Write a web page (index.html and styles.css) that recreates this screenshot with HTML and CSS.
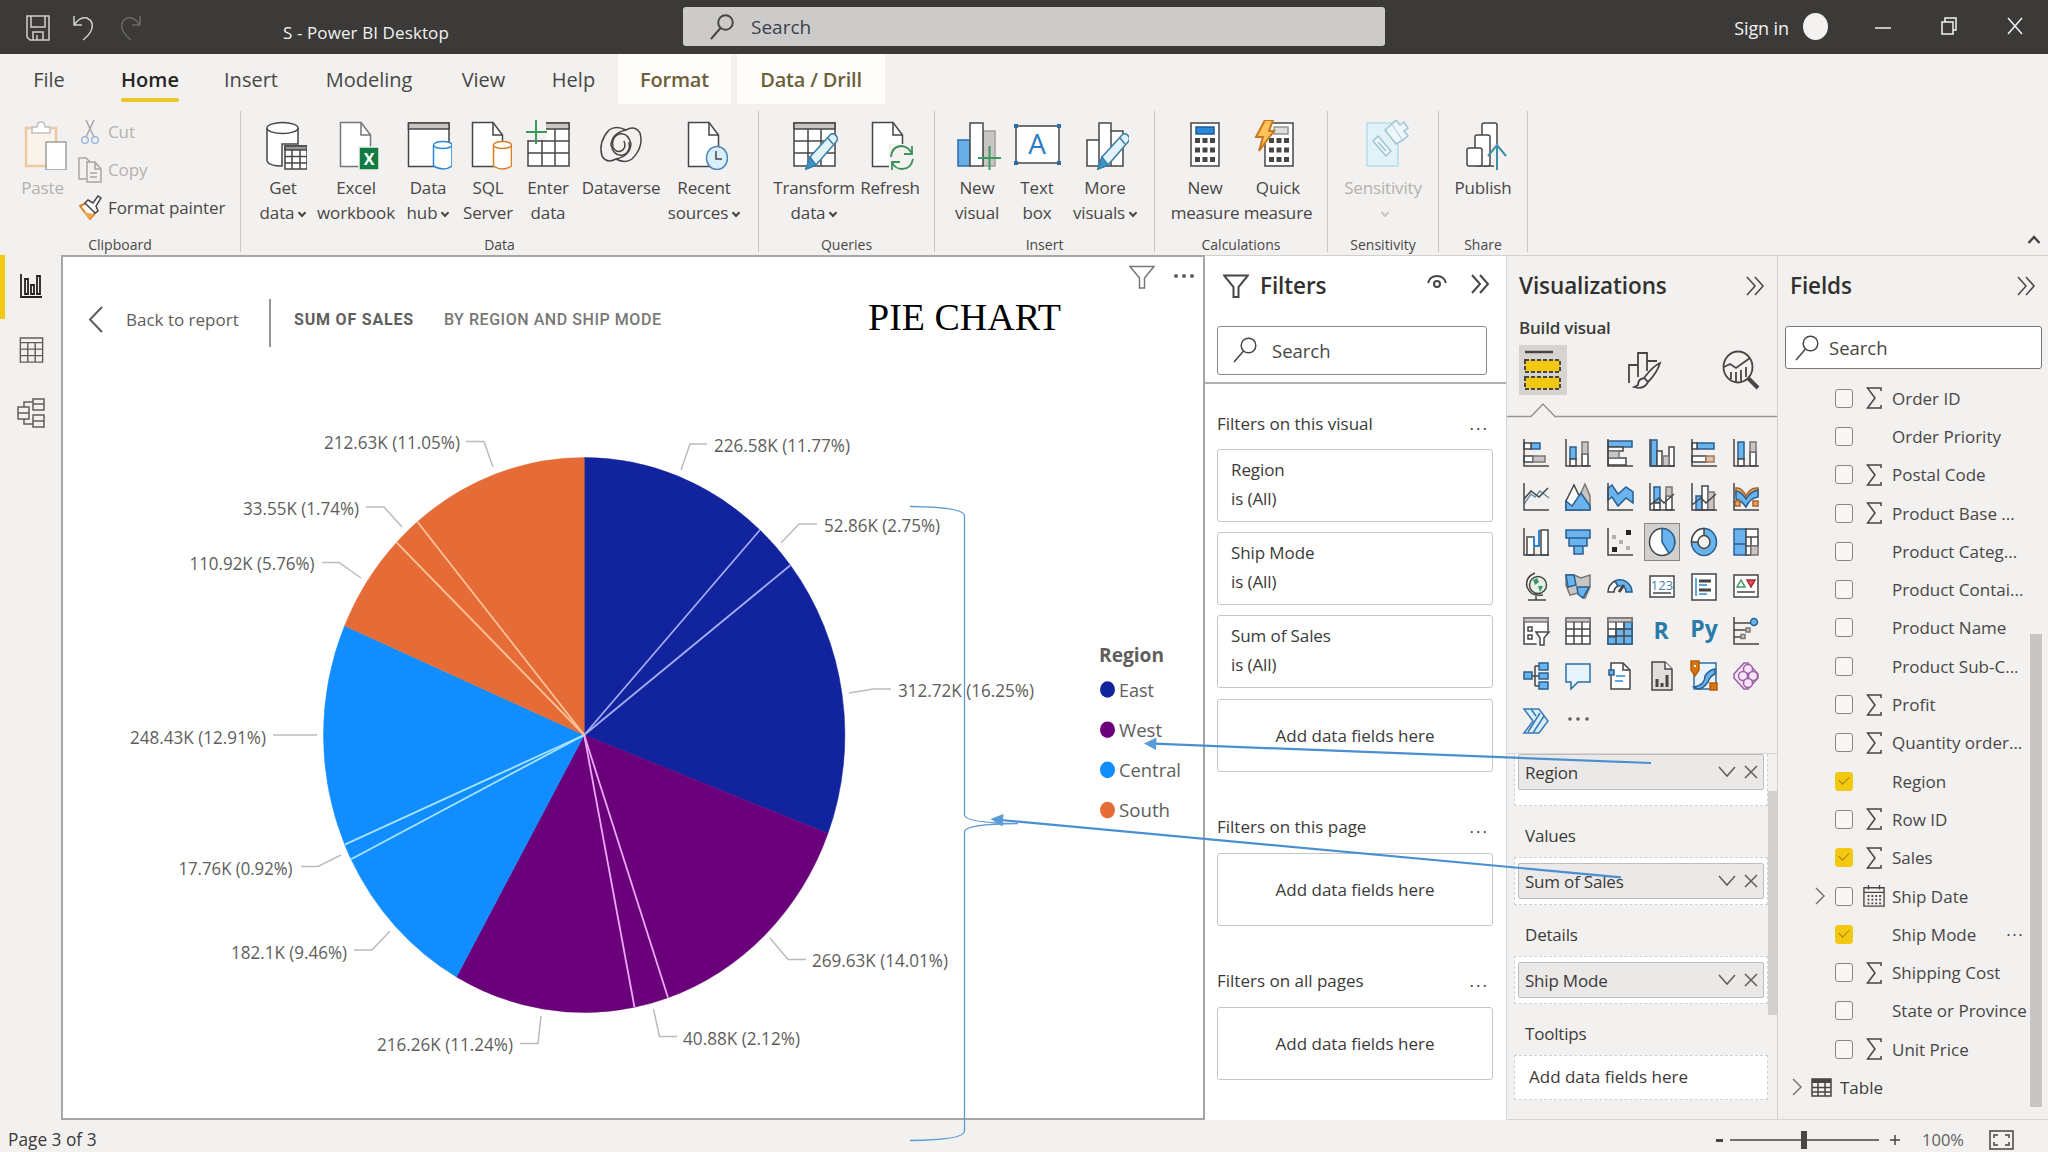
FILE: index.html
```
<!DOCTYPE html>
<html lang="en">
<head>
    <meta charset="UTF-8">
    <meta name="viewport" content="width=device-width, initial-scale=1.0">
    <title>S - Power BI Desktop</title>
    <link rel="stylesheet" href="styles.css">
</head>
<body>
    <!-- shared icons -->
    <svg class="sprite">
        <symbol id="search" viewBox="0 0 24 26"><circle cx="15.5" cy="8.5" r="7.3"/><path d="M10.5 14L1 25"/></symbol>
        <symbol id="page" viewBox="-24 0 48 50"><path d="M-15.5 2.5H5L14.5 15V46.5H-15.5Z" fill="#fff"/><path d="M5 2.5V15H14.5" fill="none"/></symbol>
        <symbol id="pencil" viewBox="-24 0 48 50"><path d="M-8 49L-4 37L17 14Q21 13 23 17Q24 20 22 22L2 45Z" fill="#e3f3fb"/><path d="M-8 49L-4 37L2 45Z" fill="#3a96c8"/><path d="M14 18L19 24" fill="none"/></symbol>
        <symbol id="collapse" viewBox="0 0 20 20"><path d="M2 1L10 10L2 19M10 1L18 10L10 19"/></symbol>
        <symbol id="down" viewBox="0 0 18 12"><path d="M1 1L9 10L17 1"/></symbol>
        <symbol id="close" viewBox="0 0 14 14"><path d="M1 1L13 13M13 1L1 13"/></symbol>
        <symbol id="right" viewBox="0 0 12 18"><path d="M2 1L10 9L2 17"/></symbol>
        <symbol id="sigma" viewBox="0 0 16 22"><path d="M15 4V1H1.5L9 11L1.5 21H15V18"/></symbol>
        <symbol id="funnel" viewBox="0 0 26 24"><path d="M1 1.5H25L15.5 13V23H10.5V13Z"/></symbol>
        <symbol id="table" viewBox="0 0 26 28"><path d="M1 1H25V27H1ZM1 6H25M1 13H25M1 20H25M9 6V27M17 6V27"/></symbol>
    </svg>

    <header class="titlebar">
        <div class="quick">
            <svg width="24" height="26" viewBox="0 0 24 26"><path d="M1 1H23V25H4L1 22ZM5 1V12H19V1M7 25V17H17V25M11 20V25"/></svg>
            <svg width="24" height="26" viewBox="0 0 24 26"><path d="M2 1V10H10M2 10Q8 1 15 3Q23 7 19 16Q17 20 11 25"/></svg>
            <svg class="dim" width="24" height="26" viewBox="0 0 24 26"><path d="M22 1V10H14M22 10Q16 1 9 3Q1 7 5 16Q7 20 13 25"/></svg>
        </div>
        <div class="title">S - Power BI Desktop</div>
        <div class="title-search"><svg width="24" height="26"><use href="#search"/></svg>Search</div>
        <div class="window-controls">
            <span class="sign-in">Sign in</span>
            <span class="avatar"></span>
            <svg width="16" height="18" viewBox="0 0 16 18"><path d="M0 11H16"/></svg>
            <svg width="16" height="18" viewBox="0 0 16 18"><path d="M1 5H12V17H1ZM4 5V1H15V13H12"/></svg>
            <svg width="16" height="18" viewBox="0 0 16 18"><path d="M1 1L15 17M15 1L1 17"/></svg>
        </div>
    </header>

    <nav class="tabs">
        <a class="tab tab-file">File</a>
        <a class="tab tab-home active">Home</a>
        <a class="tab tab-insert">Insert</a>
        <a class="tab tab-modeling">Modeling</a>
        <a class="tab tab-view">View</a>
        <a class="tab tab-help">Help</a>
        <a class="tab context tab-format">Format</a>
        <a class="tab context tab-drill">Data / Drill</a>
    </nav>

    <section class="ribbon">
        <div class="group group-clipboard">
            <div class="tools">
                <div class="tool disabled">
                    <svg width="48" height="50" viewBox="-24 0 48 50"><path d="M-17 8H13V46H-17Z" fill="#faf3ec" stroke="#ecc9a0" stroke-width="2.5"/><path d="M-11 13V7H-6Q-6 2 -2 2Q2 2 2 7H7V13Z" fill="#fff" stroke="#c2c0be"/><path d="M3 22H23V50H3Z" fill="#fff" stroke="#a19f9d"/></svg>
                    Paste
                </div>
                <div class="small-tools">
                    <div class="small-tool disabled"><svg width="24" height="26" viewBox="0 0 24 26"><path d="M8 1L16 18M16 1L8 18"/><g stroke="#9db8dc"><circle cx="7" cy="21" r="3.3"/><circle cx="17" cy="21" r="3.3"/></g></svg>Cut</div>
                    <div class="small-tool disabled"><svg width="24" height="26" viewBox="0 0 24 26"><path d="M8 22H1V1H8L12 5M9 5H17L23 12V25H9ZM17 5V12H23M12 16H19M12 20H19"/></svg>Copy</div>
                    <div class="small-tool"><svg width="24" height="26" viewBox="0 0 24 26"><path d="M2 11L12 24L18 17L8 8Z" fill="#fff" stroke="#d98027" stroke-width="2"/><path d="M5 17L12 24L16 19Z" fill="#f5a552" stroke="none"/><path d="M7 8L10 5L15 8L20 1L23 3L18 11L20 16L17 18Z" fill="#fff"/></svg>Format painter</div>
                </div>
            </div>
            <div class="group-name">Clipboard</div>
        </div>

        <div class="group group-data">
            <div class="tools">
                <div class="tool">
                    <svg width="48" height="50" viewBox="-24 0 48 50"><path d="M-16 8V41Q-14 46 -1 46V24H15V8" fill="#fff"/><ellipse cx="-.5" cy="8" rx="15.5" ry="5.5" fill="#fff"/><path d="M2 26H24V49H2Z" fill="#fff"/><path d="M2 26H24V30H2Z" fill="#979593"/><path d="M2 36.500H24M2 43H24M9 30V49M17 30V49"/></svg>
                    Get<br>data<i></i>
                </div>
                <div class="tool">
                    <svg width="48" height="50" viewBox="-24 0 48 50"><use href="#page" x="-24" width="48" height="50" stroke="#797775"/><path d="M3 27H23V50H3Z" fill="#107c41" stroke="#f3f2f1"/><text x="13" y="44.500" class="x-mark">X</text></svg>
                    Excel<br>workbook
                </div>
                <div class="tool">
                    <svg width="48" height="50" viewBox="-24 0 48 50"><path d="M-19.500 3H21V46.500H-19.500Z" fill="#fff"/><path d="M-19.500 3H21V9H-19.500Z" fill="#c8c6c4"/><path d="M5.500 25V46Q15 52 24 46V25" fill="#fff" stroke="#2b88d8"/><ellipse cx="14.800" cy="25" rx="9.200" ry="3.500" fill="#fff" stroke="#2b88d8"/></svg>
                    Data<br>hub<i></i>
                </div>
                <div class="tool">
                    <svg width="48" height="50" viewBox="-24 0 48 50"><use href="#page" x="-24" width="48" height="50"/><path d="M5.500 25V46Q14.500 52 23.500 46V25" fill="#fff" stroke="#d98027"/><ellipse cx="14.500" cy="25" rx="9" ry="3.500" fill="#fff" stroke="#d98027"/></svg>
                    SQL<br>Server
                </div>
                <div class="tool">
                    <svg width="48" height="50" viewBox="-24 0 48 50"><path d="M-20 3H21V46H-20Z" fill="#fff"/><path d="M-20 3H21V9H-20Z" fill="#c8c6c4"/><path d="M-20 21H21M-20 33H21M-6 9V46M7 9V46"/><path d="M-22 0H-2V20H-22Z" fill="#f3f2f1" stroke="none"/><path d="M-12 0V24M-22 12H-1" stroke="#3c9a5f" stroke-width="2"/></svg>
                    Enter<br>data
                </div>
                <div class="tool">
                    <svg width="48" height="50" viewBox="-24 0 48 50"><path d="M-12 10Q-23 22 -19 36Q-14 44 -5 39Q9 36 10 24Q7 12 -2 14Q-10 17 -8 27Q-5 33 0 31Q6 28 3 21"/><path d="M11 39Q23 27 19 13Q14 5 5 10Q-9 13 -10 25Q-7 37 2 35Q10 32 8 22"/><path d="M-12 10Q-5 5 5 10M-5 39Q4 44 11 39"/></svg>
                    Dataverse
                </div>
                <div class="tool">
                    <svg width="48" height="50" viewBox="-24 0 48 50"><use href="#page" x="-24" width="48" height="50"/><ellipse cx="13" cy="38" rx="10.500" ry="11.500" fill="#d9effc" stroke="#4a86ba"/><path d="M12 31V39H18"/></svg>
                    Recent<br>sources<i></i>
                </div>
            </div>
            <div class="group-name">Data</div>
        </div>

        <div class="group group-queries">
            <div class="tools">
                <div class="tool">
                    <svg width="48" height="50" viewBox="-24 0 48 50"><path d="M-20 3H21V46H-20Z" fill="#fff"/><path d="M-20 3H21V9H-20Z" fill="#c8c6c4"/><path d="M-20 21H21M-20 33H21M-6 9V46M7 9V46"/><use href="#pencil" x="-24" width="48" height="50" stroke="#3a7fa8"/></svg>
                    Transform<br>data<i></i>
                </div>
                <div class="tool">
                    <svg width="48" height="50" viewBox="-24 0 48 50"><use href="#page" x="-26" width="48" height="50"/><path d="M-1 24H24V50H-1Z" fill="#f3f2f1" stroke="none"/><path d="M1 37Q2 26 12 26Q19 27 22 34M22 26V34H14M23 39Q21 49 12 49Q5 49 2 42M2 50V42H10" stroke="#3f8f5b" stroke-width="1.800"/></svg>
                    Refresh
                </div>
            </div>
            <div class="group-name">Queries</div>
        </div>

        <div class="group group-insert">
            <div class="tools">
                <div class="tool">
                    <svg width="48" height="50" viewBox="-24 0 48 50"><path d="M-19 20H-7V46H-19Z" fill="#69afe5" stroke="#2b6cb0"/><path d="M6 11H18V46H6Z" fill="#c8c6c4" stroke="#a19f9d"/><path d="M-7 3H6V46H-7Z" fill="#fff"/><path d="M12.500 26V50M1 38H24" stroke="#3c9a5f" stroke-width="2"/></svg>
                    New<br>visual
                </div>
                <div class="tool">
                    <svg width="48" height="50" viewBox="-24 0 48 50"><path d="M-21 6H22V43H-21Z" fill="#fff"/><text x="0" y="34" class="a-mark">A</text><path d="M-21 6h.1M22 6h.1M-21 43h.1M22 43h.1" stroke="#2b6ea5" stroke-width="4" stroke-linecap="square"/></svg>
                    Text<br>box
                </div>
                <div class="tool">
                    <svg width="48" height="50" viewBox="-24 0 48 50"><path d="M-18 20H-6V46H-18ZM6 11H18V46H6ZM-6 3H6V46H-6Z" fill="#fff"/><use href="#pencil" x="-23" width="48" height="50" stroke="#3a7fa8"/></svg>
                    More<br>visuals<i></i>
                </div>
            </div>
            <div class="group-name">Insert</div>
        </div>

        <div class="group group-calc">
            <div class="tools">
                <div class="tool">
                    <svg width="48" height="50" viewBox="-24 0 48 50"><path d="M-14 3H14V46H-14Z" fill="#fff"/><path d="M-9 7H9V14H-9Z" fill="#2b88d8" stroke="#1c5a91"/><path d="M-10 20.500H10M-10 30H10M-10 39.500H10" stroke-width="5" stroke-dasharray="5 2.500"/></svg>
                    New<br>measure
                </div>
                <div class="tool">
                    <svg width="48" height="50" viewBox="-24 0 48 50"><path d="M-13 3H15V46H-13Z" fill="#fff"/><path d="M-4 7H10V14H-4Z" fill="#e1dfdd" stroke="#979593"/><path d="M-9 20.500H11M-9 30H11M-9 39.500H11" stroke-width="5" stroke-dasharray="5 2.500"/><path d="M-13 0H-5L-9 11H-4L-19 31L-15 17H-22Z" fill="#ffc35c" stroke="#c8781e" stroke-width="2"/></svg>
                    Quick<br>measure
                </div>
            </div>
            <div class="group-name">Calculations</div>
        </div>

        <div class="group group-sensitivity">
            <div class="tools">
                <div class="tool disabled">
                    <svg width="54" height="50" viewBox="-27 0 54 50"><path d="M-16 3H15V46H-16Z" fill="#e2f2f9" stroke="#b5dcec"/><g fill="#eef7fb" stroke="#9fc3d2"><path d="M-10 21L-5 16L8 31L3 36ZM-5 22L3 31M2 10L9 4L20 20L13 24Z"/><path d="M9 4L13 0L17 5L21 2L25 8L21 11L25 16L20 20"/></g></svg>
                    Sensitivity<br><i></i>
                </div>
            </div>
            <div class="group-name">Sensitivity</div>
        </div>

        <div class="group group-share">
            <div class="tools">
                <div class="tool">
                    <svg width="48" height="50" viewBox="-24 0 48 50"><rect x="-1" y="3" width="15" height="43" rx="2" fill="#fff"/><rect x="-8" y="15" width="15" height="31" rx="2" fill="#fff"/><rect x="-16" y="28" width="15" height="18" rx="2" fill="#fff"/><path d="M8 24H21V50H11V44H8Z" fill="#f3f2f1" stroke="none"/><path d="M14 50V26M5 36L14 25L23 36" stroke="#3d8fa5" stroke-width="2"/></svg>
                    Publish
                </div>
            </div>
            <div class="group-name">Share</div>
        </div>
        <svg class="ribbon-toggle" width="14" height="9" viewBox="0 0 14 9"><path d="M1.500 8L7 2L12.500 8"/></svg>
    </section>

    <main class="workspace">
        <aside class="rail">
            <a class="rail-item active"><svg width="22" height="24" viewBox="0 0 22 24"><path d="M1 0V23H22M5 5H8V20H5ZM11 11H14V20H11ZM17 2H20V20H17Z"/></svg></a>
            <a class="rail-item"><svg width="25" height="26"><use href="#table"/></svg></a>
            <a class="rail-item"><svg width="28" height="30" viewBox="0 0 28 30"><path d="M1 9H12V21H1ZM1 15H12M16 1H27V12H16ZM16 6H27M16 17H27V29H16ZM16 23H27M7 9V4H16M7 21V26H16"/></svg></a>
        </aside>

        <section class="canvas">
            <div class="visual-header">
                <svg width="26" height="24"><use href="#funnel"/></svg>
                <svg class="dots" width="24" height="6" viewBox="0 0 24 6"><circle cx="4" cy="3" r="2"/><circle cx="12" cy="3" r="2"/><circle cx="20" cy="3" r="2"/></svg>
            </div>
            <div class="crumbs">
                <svg width="15" height="27" viewBox="0 0 15 27"><path d="M14 1L2 13.500L14 26"/></svg>
                <span class="back">Back to report</span>
                <span class="measure">SUM OF SALES</span>
                <span class="by">BY REGION AND SHIP MODE</span>
                <span class="chart-title">PIE CHART</span>
            </div>
            <svg class="chart" width="1138" height="740" viewBox="63 378 1138 740"></svg>
        </section>

        <aside class="filters">
            <div class="pane-head">
                <svg width="26" height="24"><use href="#funnel"/></svg>
                <h2>Filters</h2>
                <svg class="eye" width="20" height="15" viewBox="0 0 20 15"><path d="M1 8Q3 1 10 1Q17 1 19 8"/><circle cx="10" cy="9" r="3"/></svg>
                <svg width="20" height="20"><use href="#collapse"/></svg>
            </div>
            <div class="search-box"><svg width="24" height="26"><use href="#search"/></svg>Search</div>
            <div class="filter-list">
                <div class="filter-title">Filters on this visual<b>...</b></div>
                <div class="card">Region<br>is (All)</div>
                <div class="card">Ship Mode<br>is (All)</div>
                <div class="card">Sum of Sales<br>is (All)</div>
                <div class="card drop">Add data fields here</div>
                <div class="filter-title later">Filters on this page<b>...</b></div>
                <div class="card drop">Add data fields here</div>
                <div class="filter-title later">Filters on all pages<b>...</b></div>
                <div class="card drop">Add data fields here</div>
            </div>
        </aside>

        <aside class="visualizations">
            <div class="pane-head">
                <h2>Visualizations</h2>
                <svg width="20" height="20"><use href="#collapse"/></svg>
            </div>
            <h3>Build visual</h3>
            <div class="modes">
                <span class="mode active"><svg width="38" height="42" viewBox="0 0 38 42"><path d="M1 2H29" stroke-width="2.500"/><path d="M1 10H36V22H1ZM1 27H36V39H1Z" fill="#f2c811" stroke-dasharray="4 2" stroke-width="2"/></svg></span>
                <span class="mode"><svg width="36" height="38" viewBox="0 0 36 38"><path d="M2 32V14H11V26M11 14V2H20V20M20 10H30"/><path d="M33 12Q26 15 17 27L21 31Q30 22 33 12ZM17 27Q11 28 11 34L7 36Q17 39 21 31" fill="#f3f2f1"/></svg></span>
                <span class="mode"><svg width="38" height="40" viewBox="0 0 38 40"><ellipse cx="16" cy="17" rx="14.500" ry="15.500"/><path d="M2 17L8 14L14 18L28 8M9 22V29M14 22V32M19 20V31M24 17V27"/><path d="M26 28L36 38" stroke-width="4"/></svg></span>
            </div>
            <svg class="notch" width="270" height="16" viewBox="0 0 270 16"><path d="M0 14.500H24L36 2L48 14.500H270"/></svg>

            <div class="gallery">
                <svg viewBox="0 0 26 28"><path d="M8 4H17V10H8Z" class="b"/><path d="M1 4H8V10H1ZM1 17H10V23H1Z" class="w"/><path d="M10 17H22V23H10Z" class="g"/><path d="M1 0V27H26"/></svg>
                <svg viewBox="0 0 26 28"><path d="M5 8H11V20H5Z" class="b"/><path d="M5 20H11V27H5ZM17 15H23V27H17Z" class="w"/><path d="M17 3H23V15H17Z" class="g"/><path d="M1 0V27H26"/></svg>
                <svg viewBox="0 0 26 28"><path d="M1 2H25V8H1Z" class="b"/><path d="M1 8H16V12H1ZM1 19H19V26H1Z" class="w"/><path d="M1 12H12V19H1Z" class="g"/><path d="M1 0V27H26"/></svg>
                <svg viewBox="0 0 26 28"><path d="M2 1H8V27H2Z" class="b"/><path d="M8 12H13V27H8ZM20 8H25V27H20Z" class="w"/><path d="M14 17H20V27H14Z" class="g"/><path d="M1 0V27H26"/></svg>
                <svg viewBox="0 0 26 28"><path d="M6 4H23V10H6Z" class="b"/><path d="M1 4H6V10H1ZM1 17H15V23H1Z" class="w"/><path d="M15 17H23V23H15Z" class="t"/><path d="M1 0V27H26"/></svg>
                <svg viewBox="0 0 26 28"><path d="M5 3H11V20H5Z" class="b"/><path d="M5 20H11V27H5ZM17 13H23V27H17Z" class="w"/><path d="M17 3H23V13H17Z" class="g"/><path d="M1 0V27H26"/></svg>

                <svg viewBox="0 0 26 28"><path d="M1 21L8 11L12 14L17 8L26 15" stroke="#6a8fa8"/><path d="M1 16L8 8L16 14L25 5"/><path d="M1 0V27H26"/></svg>
                <svg viewBox="0 0 26 28"><path d="M14 14L20 1L25 13V27H14Z" class="g"/><path d="M1 18L9 2L16 17V27H1Z" class="w"/><path d="M1 18L7 23L16 10L25 23V27H1Z" class="b"/></svg>
                <svg viewBox="0 0 26 28"><path d="M1 5L5 2L11 11L19 4L26 9V20L19 15L11 23L5 14L1 17Z" class="b"/><path d="M1 0V27H26"/></svg>
                <svg viewBox="0 0 26 28"><path d="M5 4H11V20H5Z" class="b"/><path d="M5 20H11V27H5ZM17 13H23V27H17Z" class="w"/><path d="M17 4H23V13H17Z" class="g"/><path d="M1 0V27H26M1 22L10 15L15 20L25 11"/></svg>
                <svg viewBox="0 0 26 28"><path d="M5 13H11V27H5Z" class="b"/><path d="M11 3H17V27H11Z" class="w"/><path d="M17 9H23V27H17Z" class="g"/><path d="M1 0V27H26M1 22L10 15L15 20L25 11"/></svg>
                <svg viewBox="0 0 26 28"><path d="M3 5Q9 4 13 13Q17 4 25 5V12Q18 12 13 20Q9 14 3 12Z" class="o"/><path d="M3 8Q9 9 13 16Q17 9 25 7V14Q17 15 13 24Q8 17 3 16Z" class="b"/><path d="M2 18H7V23H2ZM20 18H25V23H20Z" class="o"/><path d="M1 0V27H26"/></svg>

                <svg viewBox="0 0 26 28"><path d="M4 9H11V27H4ZM18 2H25V27H18Z" class="w"/><path d="M11 9V18H16V2" stroke="#2b88d8" stroke-width="2"/><path d="M1 0V27H26"/></svg>
                <svg viewBox="0 0 26 28"><path d="M1 2H25V10H1ZM4 10H22V18H4ZM9 18H18V26H9Z" class="b"/></svg>
                <svg viewBox="0 0 26 28"><path d="M5 7h4v4h-4zM12 12h4v4h-4zM19 18h4v4h-4z" fill="#b3b0ad" stroke="none"/><path d="M19 2h5v5h-5zM5 19h5v5h-5z" fill="#252423" stroke="none"/><path d="M1 0V27H26"/></svg>
                <svg viewBox="0 0 26 28" class="selected"><ellipse cx="13" cy="14" rx="12.500" ry="13.500" class="w"/><path d="M13 .5A12.500 13.500 0 0 1 20 25.500L13 14Z" class="b"/></svg>
                <svg viewBox="0 0 26 28"><ellipse cx="13" cy="14" rx="12.500" ry="13.500" class="b"/><path d="M13 .5A12.500 13.500 0 0 0 .5 14H7L13 7Z" class="w"/><ellipse cx="13" cy="14" rx="6" ry="6.500" fill="#f3f2f1"/></svg>
                <svg viewBox="0 0 26 28"><path d="M1 1H13V27H1ZM1 16H13" class="b"/><path d="M13 1H25V9H13ZM13 9H18V18H13ZM18 9H25V18H18ZM13 18H18V27H13Z" class="w"/><path d="M18 18H25V27H18Z" class="g"/></svg>

                <svg viewBox="0 0 26 28"><circle cx="15" cy="12" r="8.500" fill="#e5f1e8" stroke="#484644"/><path d="M10 7L14 5L16 9L12 12ZM15 13H20L17 19Z" fill="#3c9a5f" stroke="none"/><path d="M12 0Q2 4 4 14Q8 24 20 22M13 23V27M5 27H23" stroke="#484644"/></svg>
                <svg viewBox="0 0 26 28"><path d="M1 2H9L16 5L25 2V14L20 25L13 20L5 22L1 12Z" class="g"/><path d="M1 2H9L11 12L3 14ZM12 14H24L18 25L13 21Z" class="b"/></svg>
                <svg viewBox="0 0 26 28"><path d="M1 19A12 13 0 0 1 8 8L11 13Q7 15 7 19Z" class="w"/><path d="M8 8A12 13 0 0 1 25 19H19Q19 12 11 13Z" class="b"/><path d="M12 19L17 12" stroke-width="3"/></svg>
                <svg viewBox="0 0 26 28"><path d="M1 3H25V24H1Z" class="w"/><text x="13" y="17" class="num">123</text><path d="M4 20H22"/></svg>
                <svg viewBox="0 0 26 28"><path d="M1 1H25V27H1Z" class="w"/><path d="M5 5V23" stroke="#2b88d8"/><path d="M8 8H20M8 17H20" stroke-width="3"/><path d="M8 12H16M8 21H16" stroke="#2b88d8"/></svg>
                <svg viewBox="0 0 26 28"><path d="M1 2H25V24H1Z" class="w"/><path d="M4 14L8 7L12 14Z" stroke="#3c9a5f"/><path d="M14 7H22L18 14Z" fill="#e0526a" stroke="#a4262c"/><path d="M4 19H22"/></svg>

                <svg viewBox="0 0 26 28"><path d="M1 1H25V27H1Z" class="w"/><path d="M1 1H25V5H1Z" class="g"/><path d="M5 10H9V14H5ZM5 18H9V22H5Z"/><path d="M12 14H27V29H14L12 20Z" fill="#f3f2f1" stroke="none"/><path d="M13 15H26L21 21V28H17V21Z" class="w"/></svg>
                <svg viewBox="0 0 26 28"><path d="M1 1H25V27H1Z" class="w"/><path d="M1 1H25V5H1Z" class="g"/><path d="M1 12H25M1 19H25M9 5V27M17 5V27"/></svg>
                <svg viewBox="0 0 26 28"><path d="M1 1H25V27H1Z" class="w"/><path d="M17 5H25V27H1V20H9V12H17Z" class="b"/><path d="M1 1H25V5H1Z" class="g"/><path d="M1 12H25M1 19H25M9 5V27M17 5V27"/></svg>
                <svg viewBox="0 0 26 28"><text x="12" y="22" class="r-mark">R</text></svg>
                <svg viewBox="0 0 26 28"><text x="13" y="20" class="py-mark">Py</text></svg>
                <svg viewBox="0 0 26 28"><path d="M1 6H18M1 13H13M1 20H8"/><circle cx="21" cy="5" r="3.500" class="b"/><path d="M13 11h4v4h-4zM8 17.500h4v4h-4z" class="g"/><path d="M1 0V27H26"/></svg>

                <svg viewBox="0 0 26 28"><path d="M9 14H16M12 4V24M12 4H16M12 24H16"/><path d="M1 10H9V17H1ZM16 1H25V8H16ZM16 11H25V17H16ZM16 20H25V27H16Z" class="b"/></svg>
                <svg viewBox="0 0 26 28"><path d="M1 2H25V20H13L6 27V20H1Z" fill="#e8f4fd" stroke="#2b6ea5"/></svg>
                <svg viewBox="0 0 26 28"><path d="M4 1H16L23 8V27H4Z" class="w"/><path d="M16 1V8H23"/><path d="M9 14H18M8 19H16" stroke="#2b88d8"/><path d="M2 8h5v5h-5z" class="b"/></svg>
                <svg viewBox="0 0 26 28"><path d="M3 0H16L23 7V28H3Z" fill="#e1dfdd"/><path d="M16 0V7H23" fill="#fff"/><path d="M8 17V25M13 21V25M18 13V25" stroke-width="3"/></svg>
                <svg viewBox="0 0 26 28"><path d="M3 1H25V27H3Z" fill="#e8f4fd" stroke="#2b6ea5"/><path d="M3 25Q14 23 14 14Q18 8 24 7V12Q19 14 17 20Q12 27 7 27Z" class="b"/><path d="M0 -1H8V8L4 14L0 8ZM19 21H26V28H19Z" fill="#d9730d" stroke="#b85c06"/><path d="M3 3h2v2h-2z" fill="#fff" stroke="none"/></svg>
                <svg viewBox="0 0 26 28"><g stroke="#9b5fa5" fill="#f5e6f7"><path d="M11 1H15L25 12V16L15 27H11L1 16V12Z"/><circle cx="15" cy="7" r="4.500"/><circle cx="10" cy="14" r="4.500"/><circle cx="20" cy="14" r="4.500"/><circle cx="15" cy="21" r="4.500"/></g></svg>

                <svg viewBox="0 0 26 28"><path d="M1 2H16L25 14L16 26H1L10 14Z" fill="#d9effc" stroke="#3a78b5"/><path d="M5 25L17 6M10 26L21 9M8 2L13 9" stroke="#3a78b5"/></svg>
                <svg viewBox="0 0 26 28" class="dots"><circle cx="5" cy="12" r="1.800"/><circle cx="13" cy="12" r="1.800"/><circle cx="22" cy="12" r="1.800"/></svg>
            </div>

            <div class="wells">
                <div class="well-list">
                    <div class="well first"><div class="pill">Region<svg width="18" height="12"><use href="#down"/></svg><svg width="14" height="14"><use href="#close"/></svg></div></div>
                    <h4>Values</h4>
                    <div class="well"><div class="pill">Sum of Sales<svg width="18" height="12"><use href="#down"/></svg><svg width="14" height="14"><use href="#close"/></svg></div></div>
                    <h4>Details</h4>
                    <div class="well"><div class="pill">Ship Mode<svg width="18" height="12"><use href="#down"/></svg><svg width="14" height="14"><use href="#close"/></svg></div></div>
                    <h4>Tooltips</h4>
                    <div class="well empty">Add data fields here</div>
                </div>
                <div class="scrollbar"></div>
            </div>
        </aside>

        <aside class="fields">
            <div class="pane-head">
                <h2>Fields</h2>
                <svg width="20" height="20"><use href="#collapse"/></svg>
            </div>
            <div class="search-box"><svg width="24" height="26"><use href="#search"/></svg>Search</div>
            <div class="tree">
                <div class="field-list">
                    <div class="field"><span></span><i></i><svg><use href="#sigma"/></svg>Order ID</div>
                    <div class="field"><span></span><i></i><svg></svg>Order Priority</div>
                    <div class="field"><span></span><i></i><svg><use href="#sigma"/></svg>Postal Code</div>
                    <div class="field"><span></span><i></i><svg><use href="#sigma"/></svg>Product Base ...</div>
                    <div class="field"><span></span><i></i><svg></svg>Product Categ...</div>
                    <div class="field"><span></span><i></i><svg></svg>Product Contai...</div>
                    <div class="field"><span></span><i></i><svg></svg>Product Name</div>
                    <div class="field"><span></span><i></i><svg></svg>Product Sub-C...</div>
                    <div class="field"><span></span><i></i><svg><use href="#sigma"/></svg>Profit</div>
                    <div class="field"><span></span><i></i><svg><use href="#sigma"/></svg>Quantity order...</div>
                    <div class="field checked"><span></span><i></i><svg></svg>Region</div>
                    <div class="field"><span></span><i></i><svg><use href="#sigma"/></svg>Row ID</div>
                    <div class="field checked"><span></span><i></i><svg><use href="#sigma"/></svg>Sales</div>
                    <div class="field"><span><svg class="arrow"><use href="#right"/></svg></span><i></i><svg viewBox="0 0 24 24"><path d="M1 3H23V23H1ZM1 8H23M6 0V5M18 0V5"/><path d="M5 12H20M5 16H20M5 20H20" stroke-dasharray="2 2.200" stroke-width="2"/></svg>Ship Date</div>
                    <div class="field checked"><span></span><i></i><svg></svg>Ship Mode<b>···</b></div>
                    <div class="field"><span></span><i></i><svg><use href="#sigma"/></svg>Shipping Cost</div>
                    <div class="field"><span></span><i></i><svg></svg>State or Province</div>
                    <div class="field"><span></span><i></i><svg><use href="#sigma"/></svg>Unit Price</div>
                    <div class="table-row"><svg class="arrow"><use href="#right"/></svg><svg width="21" height="19" viewBox="0 0 21 19"><path d="M1 1H20V18H1ZM1 9.500H20M1 14H20M7 5V18M14 5V18"/><path d="M1 3H20" stroke-width="4"/></svg>Table</div>
                </div>
                <div class="scrollbar"></div>
            </div>
        </aside>
    </main>

    <footer class="status">
        <span>Page 3 of 3</span>
        <div class="zoom">
            <svg width="186" height="20" viewBox="0 0 186 20"><path d="M1 10.500H8" stroke-width="3"/><path d="M15 10H164M175 10H185M180 5V15" stroke-width="1.500"/><path d="M89 1V19" stroke-width="6"/></svg>
            <span>100%</span>
            <svg width="25" height="20" viewBox="0 0 25 20"><path d="M1 1H24V19H1Z"/><path d="M5 8V5H9M16 5H20V8M20 12V15H16M9 15H5V12"/></svg>
        </div>
    </footer>

    <!-- callouts drawn over the report -->
    <svg class="callouts" width="2048" height="1152" viewBox="0 0 2048 1152">
        <path class="brace" d="M910 506.500Q964.500 507 964.500 516V815Q965 823 1018 823.500Q964.500 824 964.500 832V1131Q964.500 1140 910 1140.500"/>
        <path class="arrow-line" d="M1651 763L1154 743.700M1621 877.300L1001 820"/>
        <path class="arrow-head" d="M1144 743.500L1156.500 737.500L1156 750ZM990.500 819L1003.500 814L1002.500 826.500Z"/>
    </svg>

    <script>
        const svgNS = 'http://www.w3.org/2000/svg';
        const chart = document.querySelector('.chart');
        const cx = 584.2, cy = 735, rx = 260.7, ry = 277.5;

        const regions = [
            { name: 'East', color: '#12239e', line: '#a3adf5' },
            { name: 'West', color: '#6b007b', line: '#eaa8f5' },
            { name: 'Central', color: '#118dff', line: '#a8e4ff' },
            { name: 'South', color: '#e66c37', line: '#ffc39c' }
        ];

        // region, percent, label, label x, baseline, label width, leader points
        const slices = [
            [0, 11.77, '226.58K (11.77%)', 714, 452, 136, '681,470 690,444 707,444'],
            [0, 2.75, '52.86K (2.75%)', 824, 532, 116, '781,543 799,524 817,524'],
            [0, 16.25, '312.72K (16.25%)', 898, 697, 136, '849,693 873,689 891,689'],
            [1, 14.01, '269.63K (14.01%)', 812, 967, 136, '770,938 788,959.5 806,959.5'],
            [1, 2.12, '40.88K (2.12%)', 683, 1045, 117, '653.5,1009 659.5,1036.5 677,1036.5'],
            [1, 11.24, '216.26K (11.24%)', 377, 1051, 136, '520,1043.5 538,1043.5 541,1016'],
            [2, 9.46, '182.1K (9.46%)', 231, 959, 116, '354,950 372,950 390,931'],
            [2, 0.92, '17.76K (0.92%)', 178.5, 874.5, 114, '301,866.5 318,866.5 341,855'],
            [2, 12.91, '248.43K (12.91%)', 130, 744, 136, '273,735 317,735'],
            [3, 5.76, '110.92K (5.76%)', 189.5, 570, 125, '322,562.5 339,562.5 361,578'],
            [3, 1.74, '33.55K (1.74%)', 243, 514.5, 116, '366,507 384,507 402,527'],
            [3, 11.05, '212.63K (11.05%)', 324, 449, 136, '466,441.5 484,441.5 493,467']
        ];

        function add(tag, attrs, text) {
            const el = document.createElementNS(svgNS, tag);
            for (const key in attrs) el.setAttribute(key, attrs[key]);
            if (text) el.textContent = text;
            chart.appendChild(el);
        }

        function point(percent) {
            const angle = percent / 100 * 2 * Math.PI;
            return [cx + rx * Math.sin(angle), cy - ry * Math.cos(angle)];
        }

        const total = slices.reduce((sum, s) => sum + s[1], 0);
        let start = 0;
        const dividers = [];
        slices.forEach((s, i) => {
            const end = start + s[1] / total * 100;
            const [x1, y1] = point(start);
            const [x2, y2] = point(end);
            const color = regions[s[0]].color;
            add('path', { d: `M${cx} ${cy}L${x1} ${y1}A${rx} ${ry} 0 0 1 ${x2} ${y2}Z`, fill: color, stroke: color, 'stroke-width': 0.5 });
            if (slices[i + 1] && slices[i + 1][0] === s[0]) dividers.push([x2, y2, regions[s[0]].line]);
            start = end;
            add('polyline', { points: s[6], class: 'leader' });
            add('text', { x: s[3], y: s[4], textLength: s[5], lengthAdjust: 'spacingAndGlyphs', class: 'slice-label' }, s[2]);
        });
        dividers.forEach(d => add('path', { d: `M${cx} ${cy}L${d[0]} ${d[1]}`, stroke: d[2], 'stroke-width': 1.8 }));

        add('text', { x: 1099, y: 662, class: 'legend-title', textLength: 65, lengthAdjust: 'spacingAndGlyphs' }, 'Region');
        const widths = [35, 43, 62, 51];
        regions.forEach((r, i) => {
            add('ellipse', { cx: 1107.5, cy: 689.5 + i * 40.2, rx: 7.5, ry: 8.3, fill: r.color, stroke: 'none' });
            add('text', { x: 1119, y: 697 + i * 40, class: 'legend-item', textLength: widths[i], lengthAdjust: 'spacingAndGlyphs' }, r.name);
        });
    </script>
</body>
</html>
```
FILE: styles.css
```
* {
    box-sizing: border-box;
}

body {
    margin: 0;
    width: 2048px;
    height: 1152px;
    display: flex;
    flex-direction: column;
    overflow: hidden;
    background-color: #f3f1f0;
    color: #3b3a39;
    font-family: "Open Sans", "Noto Sans", sans-serif;
    font-size: 17px;
}

svg {
    flex: none;
    fill: none;
    stroke: #484644;
    stroke-width: 1.5;
}

h2, h3, h4 {
    margin: 0;
    font-weight: 600;
}

.sprite {
    display: none;
}

/* title bar */
.titlebar {
    display: flex;
    flex: none;
    height: 54px;
    background-color: #3b3a38;
    color: #f3f2f1;
}

.titlebar svg {
    stroke: #d2d0ce;
}

.quick {
    display: flex;
    gap: 22px;
    width: 283px;
    padding: 15px 0 0 26px;
}

.titlebar .dim {
    stroke: #6b6967;
}

.title {
    width: 400px;
    padding-top: 12px;
    line-height: 42px;
    letter-spacing: 0.1px;
}

.title-search {
    display: flex;
    align-items: center;
    gap: 17px;
    width: 702px;
    height: 39px;
    margin-top: 7px;
    padding-left: 27px;
    border-radius: 3px;
    background-color: #cccbc9;
    color: #3b4050;
    font-size: 19px;
}

.titlebar .title-search svg {
    stroke: #484644;
    stroke-width: 2;
}

.window-controls {
    display: flex;
    align-items: center;
    margin-left: auto;
    padding-right: 25px;
    padding-bottom: 2px;
}

.window-controls svg {
    margin-left: 50px;
    stroke: #f3f2f1;
}

.window-controls .avatar + svg {
    margin-left: 47px;
}

.sign-in {
    padding-top: 3px;
    font-size: 18px;
    letter-spacing: -0.1px;
}

.avatar {
    width: 25px;
    height: 27px;
    margin-left: 14px;
    border-radius: 50%;
    background-color: #f3f2f1;
}

/* ribbon tabs */
.tabs {
    display: flex;
    flex: none;
    height: 50px;
    font-size: 20px;
    color: #484644;
}

.tab {
    position: relative;
    line-height: 52px;
    text-align: center;
}

.tab-file { width: 98px; }
.tab-home { width: 104px; }
.tab-insert { width: 98px; }
.tab-modeling { width: 138px; }
.tab-view { width: 91px; }
.tab-help { width: 89px; }
.tab-format { width: 113px; }
.tab-drill { width: 148px; margin-left: 6px; }

.tab.active {
    font-weight: 600;
    color: #252423;
}

.tab.active::after {
    content: "";
    position: absolute;
    left: 23px;
    right: 23px;
    bottom: 2px;
    height: 4px;
    border-radius: 2px;
    background-color: #eac727;
}

.tab.context {
    background-color: #fffefc;
    font-weight: 600;
    color: #6b6038;
    letter-spacing: -0.2px;
}

/* ribbon */
.ribbon {
    position: relative;
    display: flex;
    flex: none;
    height: 151px;
}

.group {
    display: flex;
    flex-direction: column;
    justify-content: space-between;
    height: 141px;
    margin-top: 7px;
    border-right: 1px solid #c8c6c4;
    color: #484644;
}

.tools {
    display: grid;
    justify-content: start;
    padding-top: 9px;
}

.tool {
    display: flow-root;
    text-align: center;
    line-height: 24.6px;
    letter-spacing: -0.15px;
    white-space: nowrap;
}

.tool svg {
    display: block;
    margin: 0 auto 6px;
}

.tool i {
    display: inline-block;
    width: 6px;
    height: 6px;
    margin: 0 1px 3px 5px;
    border: solid #484644;
    border-width: 0 2px 2px 0;
    transform: rotate(45deg);
}

.disabled {
    color: #b3b0ad;
}

.disabled svg {
    stroke: #a8a6a4;
}

.disabled i {
    border-color: #c8c6c4;
}

.group-name {
    font-size: 14px;
    line-height: 14px;
    text-align: center;
}

.group-clipboard { width: 241px; }
.group-data { width: 518px; }
.group-queries { width: 176px; }
.group-insert { width: 220px; }
.group-calc { width: 173px; }
.group-sensitivity { width: 111px; }
.group-share { width: 89px; }

.group-clipboard .tools { grid-template-columns: 49px 150px; padding-left: 18px; gap: 11px; }
.group-data .tools { grid-template-columns: 66px 80px 64px 56px 64px 82px 84px; padding-left: 9px; }
.group-queries .tools { grid-template-columns: 88px 64px; padding-left: 11px; }
.group-insert .tools { grid-template-columns: 60px 60px 76px; padding-left: 12px; }
.group-calc .tools { grid-template-columns: 76px 70px; padding-left: 12px; }
.group-sensitivity .tools,
.group-share .tools { grid-template-columns: 100%; }

.small-tools {
    display: flex;
    flex-direction: column;
    gap: 12px;
    margin-top: -1px;
}

.small-tool {
    display: flex;
    gap: 6px;
    line-height: 26px;
    letter-spacing: -0.1px;
    white-space: nowrap;
}

.x-mark, .a-mark, .num, .r-mark, .py-mark {
    stroke: none;
    text-anchor: middle;
}

.x-mark { fill: #fff; font-size: 16px; font-weight: 700; }
.a-mark { fill: #2b7cc0; font-size: 28px; }
.num { fill: #4a7fa5; font-size: 13px; }
.r-mark { fill: #2b7ba8; font-size: 23px; font-weight: 700; }
.py-mark { fill: #2b7ba8; font-size: 23px; font-weight: 700; }

.ribbon-toggle {
    position: absolute;
    right: 7px;
    bottom: 11px;
    stroke-width: 2.5;
}

/* workspace */
.workspace {
    display: flex;
    flex: none;
    height: 865px;
}

.rail {
    width: 61px;
}

.rail-item {
    display: flex;
    align-items: center;
    justify-content: center;
    height: 63.5px;
    border-left: 5px solid transparent;
    padding-right: 4px;
}

.rail-item svg {
    stroke: #605e5c;
    margin-bottom: 1px;
}

.rail-item.active {
    border-color: #f2c811;
}

.rail-item.active svg {
    stroke: #252423;
    stroke-width: 1.8;
}

.canvas {
    width: 1144px;
    border: 2px solid #a8a6a4;
    background-color: #fff;
}

.visual-header {
    display: flex;
    justify-content: flex-end;
    gap: 17px;
    height: 42px;
    padding: 8px 7px 0 0;
}

.visual-header svg {
    stroke: #797775;
}

.dots {
    margin-top: 8px;
}

svg.dots circle {
    fill: #605e5c;
    stroke: none;
}

.crumbs {
    display: flex;
    align-items: center;
    height: 48px;
    padding-left: 25px;
    color: #605e5c;
    white-space: nowrap;
}

.crumbs svg {
    stroke: #605e5c;
    stroke-width: 2;
    margin-bottom: 8px;
}

.back {
    width: 145px;
    height: 48px;
    margin-left: 23px;
    border-right: 2px solid #979593;
    font-size: 17px;
    line-height: 42px;
}

.measure, .by {
    margin: 0 0 8px 23px;
    font-size: 16px;
    font-family: Roboto, sans-serif;
    font-weight: 700;
    letter-spacing: 0.8px;
}

.by {
    margin-left: 30px;
    font-weight: 500;
    letter-spacing: 0.55px;
    color: #797775;
}

.chart-title {
    position: absolute;
    left: 868px;
    top: 295px;
    color: #000;
    font-family: "Liberation Serif", serif;
    font-size: 38px;
    line-height: 44px;
}

.chart {
    display: block;
    margin-top: 31px;
}

.leader {
    stroke: #bdbbb9;
}

.slice-label, .legend-item, .legend-title {
    stroke: none;
    fill: #605e5c;
    font-size: 18px;
}

.legend-item {
    font-size: 19px;
}

.legend-title {
    font-size: 20px;
    font-weight: 700;
}

/* side panes */
.pane-head {
    display: flex;
    align-items: center;
    height: 62px;
    color: #323130;
}

.pane-head h2 {
    flex: 1;
    font-size: 22.5px;
    line-height: 30px;
    letter-spacing: -0.1px;
}

.search-box {
    display: flex;
    align-items: center;
    border: 1.5px solid #8a8886;
    border-radius: 3px;
    background-color: #fff;
    font-size: 18.5px;
    color: #484644;
}

.filters {
    width: 302px;
    border-top: 1px solid #d2d0ce;
    border-right: 1px solid #d8d6d4;
    background-color: #fff;
}

.filters .pane-head {
    padding: 0 16px 2px 18px;
    gap: 11px;
}

.filters .pane-head svg {
    stroke-width: 2;
    margin-bottom: 5px;
}

.filters .pane-head svg:first-child {
    margin-bottom: 1px;
}

.filters .pane-head .eye {
    margin: 0 12px 8px 0;
}

.filters .search-box {
    width: 270px;
    height: 49px;
    margin: 8px 0 0 12px;
    padding: 0 0 1px 15px;
    gap: 15px;
}

.filter-list {
    margin-top: 7px;
    padding: 30px 12px 0;
    border-top: 2px solid #b3b0ad;
}

.filter-title {
    display: flex;
    justify-content: space-between;
    height: 29px;
    margin-bottom: 6.3px;
    padding-right: 5px;
    line-height: 20px;
}

.filter-title.later {
    margin-top: 45.8px;
}

.filter-title b {
    font-weight: 400;
    letter-spacing: 2px;
}

.card {
    width: 276px;
    height: 73px;
    margin-bottom: 10.1px;
    padding: 6px 13px;
    border: 1.5px solid #c8c6c4;
    border-radius: 3px;
    line-height: 28.5px;
    letter-spacing: -0.1px;
}

.card.drop {
    padding: 0;
    text-align: center;
    line-height: 71px;
    letter-spacing: 0;
}

.visualizations {
    width: 271px;
    border-top: 1px solid #d2d0ce;
    border-right: 1px solid #d2d0ce;
}

.visualizations .pane-head {
    padding: 0 12px 2px 12px;
}

.visualizations h3 {
    margin-top: -1px;
    margin-left: 12px;
    font-size: 17px;
    line-height: 22px;
    letter-spacing: -0.2px;
}

.modes {
    display: flex;
    justify-content: space-between;
    align-items: center;
    margin-top: 6px;
    padding: 0 17px 0 12px;
}

.mode {
    display: flex;
}

.mode svg {
    stroke-width: 1.8;
}

.mode.active {
    padding: 5px 5px 3px;
    background-color: #d6d4d2;
}

.notch {
    display: block;
    margin-top: 7px;
    stroke: #979593;
}

.gallery {
    display: grid;
    grid-template-columns: repeat(6, 26px);
    grid-auto-rows: 28px;
    gap: 16.7px 16.1px;
    padding: 20.5px 0 0 16px;
    height: 335px;
}

.gallery svg {
    width: 26px;
    height: 28px;
    overflow: visible;
}

.gallery .selected {
    background-color: #d2d0ce;
    outline: 1.5px solid #8a8886;
    box-shadow: 0 0 0 4px #d2d0ce;
    outline-offset: 4px;
}

.gallery .dots {
    margin: 0;
}

.b { fill: #69b3ee; stroke: #2b5f8c; }
.w { fill: #fff; }
.g { fill: #c8c6c4; stroke: #797775; }
.t { fill: #e0c3a8; stroke: #a0785a; }
.o { fill: #e8a35c; stroke: #a8642a; }

.wells {
    display: flex;
    height: 367px;
    border-top: 1px solid #d8d6d4;
    border-bottom: 1px solid #d8d6d4;
}

.well-list {
    width: 254px;
    margin-left: 7px;
}

.well {
    height: 48px;
    padding: 5px 3px;
    border: 1.5px dashed #d2d0ce;
    background-color: #fff;
}

.well.first {
    height: 52px;
    padding-top: 0;
    border-top: none;
}

.pill {
    display: flex;
    align-items: center;
    gap: 8px;
    height: 36px;
    padding: 0 5px 0 6px;
    border: 1.5px solid #bebbb8;
    border-radius: 2px;
    background-color: #ebe9e8;
    letter-spacing: -0.2px;
}

.pill svg {
    stroke: #605e5c;
}

.pill svg:nth-of-type(1) {
    margin-left: auto;
}

.wells h4 {
    height: 51px;
    padding: 18px 0 0 11px;
    font-weight: 400;
    line-height: 24px;
    letter-spacing: -0.2px;
}

.well.empty {
    height: 45px;
    padding: 0 0 0 14px;
    line-height: 42px;
}

.wells .scrollbar {
    width: 9px;
    height: 224px;
    margin-top: 37px;
    background-color: #d2d0ce;
}

.fields {
    flex: 1;
    border-top: 1px solid #d2d0ce;
    border-bottom: 1px solid #d8d6d4;
}

.fields .pane-head {
    padding: 0 12px 2px 12px;
}

.fields .search-box {
    width: 257px;
    height: 43px;
    margin: 8px 0 0 7px;
    padding-left: 9px;
    gap: 10px;
    border-color: #797775;
}

.tree {
    display: flex;
    justify-content: space-between;
    padding: 10px 6px 0 7px;
}

.field {
    display: flex;
    align-items: center;
    height: 38.3px;
    white-space: nowrap;
    color: #484644;
}

.field span {
    width: 50px;
    padding-left: 29px;
}

.field i {
    width: 18px;
    height: 19px;
    border: 1.5px solid #8a8886;
    border-radius: 3px;
    background-color: #f8f7f6;
}

.field > svg {
    width: 24px;
    height: 22px;
    margin: 0 6px 0 9px;
}

.arrow {
    display: block;
    width: 12px;
    height: 18px;
    stroke: #797775;
}

.field b {
    margin-left: 30px;
    letter-spacing: 1.5px;
    font-weight: 400;
}

.checked i {
    position: relative;
    border-color: #f2c811;
    background-color: #f2c811;
}

.checked i::after {
    content: "";
    position: absolute;
    left: 5px;
    top: 1px;
    width: 5px;
    height: 9px;
    border: solid #a87f10;
    border-width: 0 1.5px 1.5px 0;
    transform: rotate(45deg);
}

.table-row {
    display: flex;
    align-items: center;
    gap: 8px;
    height: 38px;
    padding-left: 6px;
}

.tree .scrollbar {
    flex: none;
    width: 12px;
    height: 473px;
    margin-top: 255px;
    margin-left: -14px;
    background-color: #c8c6c4;
}

/* status bar */
.status {
    display: flex;
    justify-content: space-between;
    align-items: center;
    flex: 1;
    padding: 8px 34px 0 8px;
    line-height: 24px;
    font-size: 17.3px;
}

.zoom {
    display: flex;
    align-items: center;
    font-size: 16.5px;
    color: #605e5c;
}

.zoom span {
    margin: 0 25px 0 21px;
}

.callouts {
    position: absolute;
    left: 0;
    top: 0;
    pointer-events: none;
}

.brace {
    stroke: #5b9bd5;
    stroke-width: 1.3;
}

.arrow-line {
    stroke: #4a8fd2;
    stroke-width: 2.2;
}

.arrow-head {
    fill: #5b9bd5;
    stroke: none;
}
```
